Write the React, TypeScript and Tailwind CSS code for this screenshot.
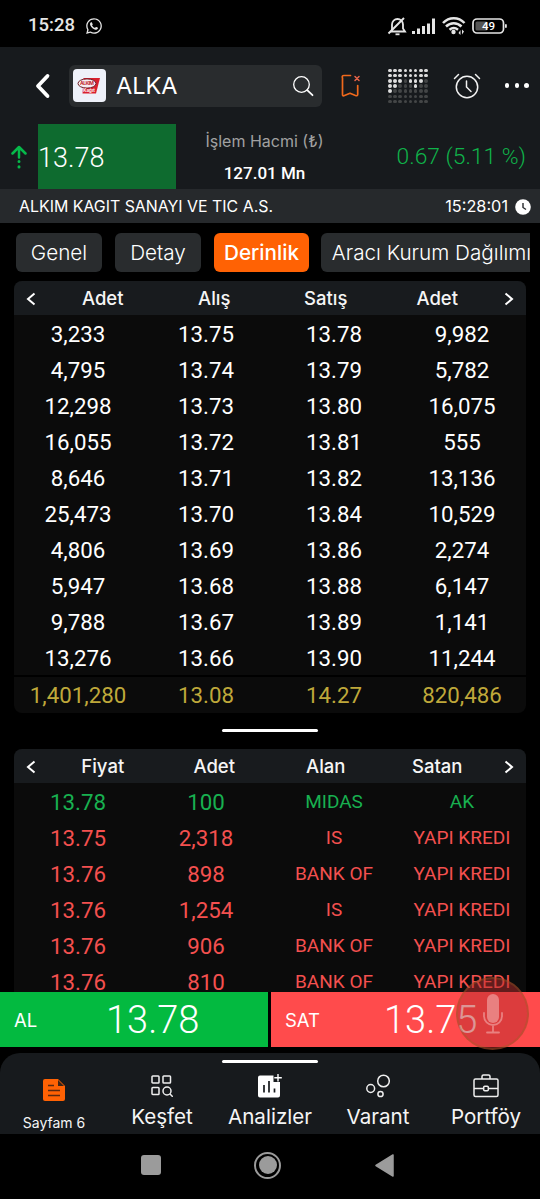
import type { ReactNode } from 'react';
import { FaWhatsapp } from 'react-icons/fa';

const depth = [
  ['3,233', '13.75', '13.78', '9,982'],
  ['4,795', '13.74', '13.79', '5,782'],
  ['12,298', '13.73', '13.80', '16,075'],
  ['16,055', '13.72', '13.81', '555'],
  ['8,646', '13.71', '13.82', '13,136'],
  ['25,473', '13.70', '13.84', '10,529'],
  ['4,806', '13.69', '13.86', '2,274'],
  ['5,947', '13.68', '13.88', '6,147'],
  ['9,788', '13.67', '13.89', '1,141'],
  ['13,276', '13.66', '13.90', '11,244'],
];

const totals = ['1,401,280', '13.08', '14.27', '820,486'];

const trades = [
  { price: '13.78', amount: '100', buyer: 'MIDAS', seller: 'AK', up: true },
  { price: '13.75', amount: '2,318', buyer: 'IS', seller: 'YAPI KREDI', up: false },
  { price: '13.76', amount: '898', buyer: 'BANK OF', seller: 'YAPI KREDI', up: false },
  { price: '13.76', amount: '1,254', buyer: 'IS', seller: 'YAPI KREDI', up: false },
  { price: '13.76', amount: '906', buyer: 'BANK OF', seller: 'YAPI KREDI', up: false },
  { price: '13.76', amount: '810', buyer: 'BANK OF', seller: 'YAPI KREDI', up: false },
];

// lit dots per row of the heat grid
const dotRows = ['11111111', '11111111', '11101110', '11000100', '10000000', '00000000', '00000000'];

function StatusBar() {
  return (
    <div className="flex h-[47px] items-center justify-between pt-[5px] pr-[31px] pl-[28px] font-['Roboto',sans-serif] text-white">
      <div className="flex items-center gap-2.5">
        <span className="text-[18.500px] font-medium text-neutral-200">15:28</span>
        <FaWhatsapp className="size-[18px] text-neutral-200" />
      </div>
      <svg width="122" height="22" viewBox="0 0 122 22" fill="none" className="text-neutral-200">
        <g stroke="currentColor" strokeWidth="1.8">
          <path d="M4.5 16.5h13.5l-2-3V9.500a5.500 5.500 0 0 0-11 0v4.500z" />
          <path d="M1.500 18.500L17 3" strokeWidth="2" />
          <path d="M8.500 19.300h4" />
        </g>
        <g fill="currentColor">
          <rect x="25" y="16" width="3" height="3" />
          <rect x="30" y="13.500" width="3" height="5.500" />
          <rect x="35" y="11" width="3" height="8" />
          <rect x="40" y="8.500" width="3" height="10.500" />
          <rect x="45" y="3.500" width="3" height="15.500" />
          <circle cx="66.500" cy="17" r="2.200" />
          <path d="M73.500 15v5l-2-2zM75 19.500v-5l2 2z" />
        </g>
        <g stroke="currentColor" strokeWidth="2.500">
          <path d="M56 8c6-6.500 15.500-6.500 21.500 0M59 11.500c4.500-4.500 11-4.500 15.500 0M62.500 14.700c2.500-2 6-2 8.500 0" />
        </g>
        <rect x="86" y="4" width="30.500" height="14" rx="4" stroke="currentColor" strokeWidth="1.700" />
        <rect x="88.500" y="6.500" width="12" height="9" rx="1.500" fill="#555" />
        <rect x="118" y="9" width="1.800" height="4" rx="1" fill="currentColor" />
        <text x="101.500" y="15.200" textAnchor="middle" fill="white" className="text-[11.500px] font-medium">49</text>
      </svg>
    </div>
  );
}

function SearchRow() {
  return (
    <div className="flex h-[77px] items-center pl-[35px]">
      <svg width="16" height="26" viewBox="0 0 16 26" fill="none" stroke="white" strokeWidth="3.8" strokeLinecap="round" strokeLinejoin="round">
        <path d="M12.500 3L3 13l9.500 10" />
      </svg>
      <div className="ml-[18px] flex h-[42px] w-[253px] items-center rounded-md bg-[#292c2e] pr-2 pl-[4px]">
        <svg width="33" height="33" viewBox="0 0 33 33" className="shrink-0 rounded-[4px] bg-[#eef1f9]">
          <path d="M10.500 9h16.500l-4 15.500H9.500z" fill="#d9202e" />
          <ellipse cx="14" cy="14.500" rx="9" ry="4.600" fill="#f6eef2" stroke="#6b1c26" strokeWidth="1" />
          <text x="14" y="16.200" textAnchor="middle" fill="#c31f2e" textLength="14" className="font-['Inter',sans-serif] text-[5px] font-bold">ALKIM</text>
          <text x="16" y="23.300" textAnchor="middle" fill="white" className="font-['Inter',sans-serif] text-[4.500px] font-bold">Kağıt</text>
        </svg>
        <span className="ml-[10px] font-['Inter',sans-serif] text-[23.500px] text-white">ALKA</span>
        <svg width="22" height="22" viewBox="0 0 22 22" fill="none" stroke="white" strokeWidth="1.300" strokeLinecap="round" className="ml-auto">
          <circle cx="9.500" cy="9.500" r="7.800" />
          <path d="M15.200 15.200l5.300 5" strokeWidth="1.800" />
        </svg>
      </div>
      <svg width="22" height="24" viewBox="0 0 22 24" fill="none" stroke="#f0691c" strokeWidth="1.700" strokeLinecap="round" strokeLinejoin="round" className="ml-[18px]">
        <path d="M10.500 1.500H4Q1.500 1.500 2.500 4v16.500q0 2 2 1l5.500-2.200 5.500 2.200q2.200.8 2.200-1.200V11.500" />
        <path d="M15 2.500l4 4M19 2.500l-4 4" stroke="#e9654a" strokeWidth="1.500" />
      </svg>
      <div className="mt-[1px] ml-[26px] grid grid-cols-8 gap-x-[1.700px] gap-y-[1.700px]">
        {dotRows.join('').split('').map((dot, i) => (
          <i key={i} className={`size-[3.500px] rounded-full ${dot === '1' ? 'bg-[#dedede]' : 'bg-[#444647]'}`} />
        ))}
      </div>
      <svg width="28" height="28" viewBox="0 0 28 28" fill="none" stroke="#f2f2f2" strokeWidth="1.500" strokeLinecap="round" className="ml-[25px]">
        <circle cx="14" cy="15" r="10.700" />
        <path d="M13.500 9v6l4.500 4.500M1.500 6.500L5.500 2.500M26.500 6.500l-4-4" />
      </svg>
      <div className="ml-[24px] flex gap-[5.500px]">
        {[0, 1, 2].map((n) => (
          <i key={n} className="size-[4.300px] rounded-full bg-white" />
        ))}
      </div>
    </div>
  );
}

function PriceRow() {
  return (
    <div className="flex h-[65px] items-center pr-[14px] pl-[11px]">
      <svg width="16" height="24" viewBox="0 0 16 24" fill="none" stroke="#06b94a" strokeWidth="2.500" strokeLinecap="round" strokeLinejoin="round">
        <path d="M1.500 8.500L8 2l6.500 6.500M8 2.500v10" />
        <path d="M8 16.500v.1M8 21.800v.1" strokeWidth="3" />
      </svg>
      <div className="ml-[11px] flex h-full w-[138px] items-center bg-[#0e6b2f] pt-[3px] font-['Roboto',sans-serif] text-[27px] font-light text-white">13.78</div>
      <div className="ml-[28px] w-[121px] text-center font-['Inter',sans-serif] leading-8">
        <div className="text-[16px] text-neutral-400">İşlem Hacmi (₺)</div>
        <div className="font-['Roboto',sans-serif] text-[17px] font-medium text-white">127.01 Mn</div>
      </div>
      <div className="ml-auto pt-[2px] font-['Roboto',sans-serif] text-[22.800px] font-light text-[#0fb34a]">0.67 (5.11 %)</div>
    </div>
  );
}

function Tab({ className, children }: { className: string; children: ReactNode }) {
  return (
    <div className={`flex h-[39px] shrink-0 items-center justify-center rounded-md font-['Inter',sans-serif] text-[20.700px] whitespace-nowrap text-white ${className}`}>
      {children}
    </div>
  );
}

function TableHead({ labels }: { labels: string[] }) {
  return (
    <div className="flex h-[34px] items-center bg-[#181b1e] px-[12px] pt-[1px] font-['Inter',sans-serif] text-[18.500px] font-medium text-neutral-100">
      <svg width="10" height="14" viewBox="0 0 10 14" fill="none" stroke="white" strokeWidth="2">
        <path d="M8.500 1.500L2 7l6.500 5.500" />
      </svg>
      <div className="mx-[11px] grid flex-1 grid-cols-4 pt-[1px] text-center">
        {labels.map((label, i) => (
          <span key={i}>{label}</span>
        ))}
      </div>
      <svg width="10" height="14" viewBox="0 0 10 14" fill="none" stroke="white" strokeWidth="2">
        <path d="M1.500 1.500L8 7l-6.500 5.500" />
      </svg>
    </div>
  );
}

function NavItem({ label, icon, small }: { label: string; icon: ReactNode; small?: boolean }) {
  return (
    <div className={`flex flex-col items-center font-['Inter',sans-serif] text-neutral-100 ${small ? 'pt-[21px]' : 'pt-[17px]'}`}>
      <div className="flex h-[31px] items-center">{icon}</div>
      <span className={small ? 'mt-[7px] text-[14px]' : 'mt-[1px] text-[20.600px]'}>{label}</span>
    </div>
  );
}

function BottomNav() {
  return (
    <div className="mt-[6px] h-[81px] rounded-t-[20px] bg-[#171a1d]">
      <div className="grid h-full grid-cols-5">
        <NavItem
          small
          label="Sayfam 6"
          icon={
            <svg width="22" height="22" viewBox="0 0 22 22">
              <path d="M2 0h13l7 7v13q0 2-2 2H2q-2 0-2-2V2q0-2 2-2z" fill="#ff6204" />
              <path d="M15 1v6h6z" fill="#3d2415" />
              <path d="M5 6.500h6M5 11.500h12M5 16.500h12" fill="none" stroke="#5b2a10" strokeWidth="1.500" />
            </svg>
          }
        />
        <NavItem
          label="Keşfet"
          icon={
            <svg width="22" height="22" viewBox="0 0 22 22" fill="none" stroke="#eee" strokeWidth="1.500">
              <rect x="1" y="1" width="7" height="7" rx=".8" />
              <rect x="12" y="1" width="7.500" height="7" rx=".8" />
              <rect x="1" y="12.500" width="7" height="7" rx=".8" />
              <circle cx="16" cy="16" r="4" />
              <path d="M18.800 18.800l3 3" />
            </svg>
          }
        />
        <NavItem
          label="Analizler"
          icon={
            <svg width="24" height="24" viewBox="0 0 24 24">
              <path d="M2 1.500h13.500V8H22v13.500q0 2-2 2H2q-2 0-2-2v-18q0-2 2-2z" fill="white" />
              <path d="M6 11v7.500M11 7v11.500M16.500 14.500v4" stroke="#171a1d" strokeWidth="1.700" />
              <path d="M20 0v7.500M16.300 3.700h7.500" stroke="white" strokeWidth="1.400" />
            </svg>
          }
        />
        <NavItem
          label="Varant"
          icon={
            <svg width="24" height="24" viewBox="0 0 24 24" fill="none" stroke="#eee" strokeWidth="1.500">
              <circle cx="17.500" cy="7" r="5.800" />
              <circle cx="4.700" cy="14.500" r="3.900" />
              <circle cx="14.500" cy="20" r="2.600" />
            </svg>
          }
        />
        <NavItem
          label="Portföy"
          icon={
            <svg width="26" height="24" viewBox="0 0 26 24" fill="none" stroke="#eee" strokeWidth="1.500">
              <rect x="1" y="5" width="24" height="17.500" rx="1.500" />
              <path d="M9 5V2.500Q9 1 10.500 1h5Q17 1 17 2.500V5M1 14.500h9.500M15.500 14.500H25" />
              <rect x="10.700" y="12.200" width="4.600" height="4.600" rx="1" />
            </svg>
          }
        />
      </div>
    </div>
  );
}

export default function App() {
  return (
    <div className="relative flex h-[1199px] w-[540px] flex-col overflow-hidden bg-black">
      <StatusBar />
      <div className="bg-[#171a1d]">
        <SearchRow />
        <PriceRow />
        <div className="flex h-[34px] items-center bg-[#26292c] pt-[1px] pr-[9px] pl-[19px] font-['Inter',sans-serif] text-[15.900px] text-white">
          <span>ALKIM KAGIT SANAYI VE TIC A.S.</span>
          <span className="ml-auto text-[16.300px]">15:28:01</span>
          <svg width="16" height="16" viewBox="0 0 16 16" className="ml-[7px]">
            <circle cx="8" cy="8" r="7.800" fill="white" />
            <path d="M8 4v4.500l3 2" fill="none" stroke="#26292c" strokeWidth="1.400" />
          </svg>
        </div>
      </div>

      <div className="mt-[10px] mr-[10px] flex gap-[13px] overflow-hidden pl-4">
        <Tab className="w-[86px] bg-[#292c2e] font-light">Genel</Tab>
        <Tab className="w-[86px] bg-[#292c2e] font-light">Detay</Tab>
        <Tab className="w-[95px] bg-[#ff6204] font-medium">Derinlik</Tab>
        <Tab className="-ml-[1px] w-[221px] bg-[#292c2e] font-light">Aracı Kurum Dağılımı</Tab>
      </div>

      <div className="mx-[14px] mt-[9px] overflow-hidden rounded-lg bg-[#0b0b0b]">
        <TableHead labels={['Adet', 'Alış', 'Satış', 'Adet']} />
        <div className="h-[360px] pt-[2px] font-['Roboto',sans-serif] text-[22.300px] text-white">
          {depth.map((row) => (
            <div key={row[1]} className="grid h-9 grid-cols-4 items-center text-center">
              {row.map((cell, i) => (
                <span key={i}>{cell}</span>
              ))}
            </div>
          ))}
        </div>
        <div className="grid h-[38px] grid-cols-4 items-center border-t-2 border-black pt-[1px] text-center font-['Roboto',sans-serif] text-[22.300px] text-[#bfa83a]">
          {totals.map((cell) => (
            <span key={cell}>{cell}</span>
          ))}
        </div>
      </div>

      <div className="mx-auto mt-[16px] h-[3px] w-24 shrink-0 rounded-full bg-white" />

      <div className="mx-[14px] mt-[17px] h-[243px] shrink-0 overflow-hidden rounded-t-lg bg-[#0b0b0b]">
        <TableHead labels={['Fiyat', 'Adet', 'Alan', 'Satan']} />
        <div className="pt-[1px] font-['Roboto',sans-serif] text-[22.300px] leading-[18px]">
          {trades.map((t, i) => (
            <div key={i} className={`grid h-9 grid-cols-4 items-center text-center ${t.up ? 'text-[#18b050]' : 'text-[#f4504f]'}`}>
              <span>{t.price}</span>
              <span>{t.amount}</span>
              <span className="text-[19px]">{t.buyer}</span>
              <span className="text-[19px]">{t.seller}</span>
            </div>
          ))}
        </div>
      </div>

      <div className="flex h-[55px] shrink-0 gap-[3px] font-['Inter',sans-serif] text-white">
        <div className="flex w-[268px] items-center bg-[#03ba40] pt-[2px] pl-[14px]">
          <span className="w-[92px] text-[18.500px]">AL</span>
          <span className="font-['Roboto',sans-serif] text-[38px] font-light">13.78</span>
        </div>
        <div className="flex flex-1 items-center bg-[#ff4b4c] pt-[2px] pl-[14px]">
          <span className="w-[99px] text-[18.500px]">SAT</span>
          <span className="font-['Roboto',sans-serif] text-[38px] font-light">13.75</span>
        </div>
      </div>

      <BottomNav />

      <div className="flex h-[62px] items-center pl-[141px]">
        <div className="size-5 rounded-[3px] bg-[#9b9b9b]" />
        <div className="ml-[93px] flex size-[27px] items-center justify-center rounded-full border-2 border-[#9b9b9b]">
          <div className="size-[18px] rounded-full bg-[#9b9b9b]" />
        </div>
        <svg width="19" height="23" viewBox="0 0 19 23" className="ml-[94px]">
          <path d="M18 1v21L1 11.500z" fill="#9b9b9b" stroke="#9b9b9b" strokeWidth="1.500" strokeLinejoin="round" />
        </svg>
      </div>

      {/* active section marker */}
      <div className="absolute top-[1060px] left-[222px] h-[3px] w-24 rounded-full bg-white" />

      {/* floating voice button */}
      <div className="absolute top-[977px] left-[456px] flex size-[73px] items-center justify-center rounded-full border-2 border-[#8a6a20]/30 bg-[#b92e2e]/50">
        <svg width="20" height="40" viewBox="0 0 20 40" fill="none" stroke="#e98080" strokeWidth="1.800" strokeLinecap="round">
          <rect x="4" y="0" width="12" height="29" rx="6" fill="#e98080" stroke="none" />
          <path d="M1 19v3a9 9 0 0 0 18 0v-3M10 31v7M4 38.500h12" />
        </svg>
      </div>
    </div>
  );
}
